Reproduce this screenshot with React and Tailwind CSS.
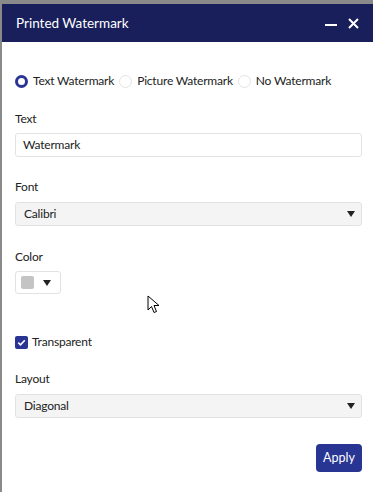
import React from "react";

const font = { fontFamily: '"Segoe UI", Lato, "Noto Sans", sans-serif' };

function Caret() {
  return (
    <svg width="8" height="6" viewBox="0 0 8 6" className="shrink-0">
      <path d="M0 0 H8 L4 6 Z" fill="#222" />
    </svg>
  );
}

function Radio({ checked, label }) {
  return (
    <label className="flex items-center gap-[5px] whitespace-nowrap">
      {checked ? (
        <span className="w-[13px] h-[13px] rounded-full border-[3.5px] border-[#283593] bg-white box-border shrink-0" />
      ) : (
        <span className="w-[13px] h-[13px] rounded-full border border-[#e3e3e3] bg-white box-border shrink-0" />
      )}
      <span>{label}</span>
    </label>
  );
}

function Select({ value }) {
  return (
    <div className="h-[24px] flex items-center justify-between pl-[8px] pr-[6px] bg-[#f4f4f4] border border-[#e2e2e2] rounded-[3px]">
      <span>{value}</span>
      <Caret />
    </div>
  );
}

export default function App() {
  return (
    <div className="w-[373px] h-[492px] bg-[#8a8a8a] pt-[4px] pl-[2px] flex flex-col text-[12px] tracking-[-0.2px] text-[#222]" style={font}>
      <div className="relative flex-1 flex flex-col bg-white">
        <div className="h-[38px] bg-[#181f5a] flex items-center justify-between pl-[14px] pr-[14px] text-white">
          <span className="text-[13.5px] tracking-normal">Printed Watermark</span>
          <div className="flex items-center gap-[10px]">
            <svg width="13" height="12" viewBox="0 0 13 12">
              <rect x="0" y="7" width="12" height="2" fill="#fff" />
            </svg>
            <svg width="11" height="11" viewBox="0 0 11 11">
              <path d="M1 1 L10 10 M10 1 L1 10" stroke="#fff" strokeWidth="2" />
            </svg>
          </div>
        </div>
        <div className="flex flex-col pl-[13px] pr-[11px] pt-[31px]">
          <div className="flex items-center gap-[5px] h-[16px]">
            <Radio checked label="Text Watermark" />
            <Radio label="Picture Watermark" />
            <Radio label="No Watermark" />
          </div>
          <div className="mt-[21px] h-[18px] flex items-center">Text</div>
          <div className="mt-[5px] h-[24px] flex items-center pl-[7px] border border-[#e3e3e3] rounded-[3px] bg-white">Watermark</div>
          <div className="mt-[21px] h-[18px] flex items-center">Font</div>
          <div className="mt-[6px]">
            <Select value="Calibri" />
          </div>
          <div className="mt-[22px] h-[18px] flex items-center">Color</div>
          <div className="mt-[5px] w-[46px] h-[23px] flex items-center gap-[9px] pl-[5px] border border-[#e2e2e2] rounded-[3px] bg-white">
            <span className="w-[13px] h-[13px] rounded-[2px] bg-[#c4c4c4]" />
            <Caret />
          </div>
          <label className="mt-[40px] flex items-center gap-[4px] h-[16px]">
            <span className="w-[13px] h-[13px] rounded-[2px] bg-[#283593] flex items-center justify-center">
              <svg width="9" height="9" viewBox="0 0 9 9">
                <path d="M1.3 4.6 L3.5 6.8 L7.8 2.2" stroke="#fff" strokeWidth="1.6" fill="none" />
              </svg>
            </span>
            <span>Transparent</span>
          </label>
          <div className="mt-[20px] h-[18px] flex items-center">Layout</div>
          <div className="mt-[6px]">
            <Select value="Diagonal" />
          </div>
          <div className="mt-[26px] flex justify-end">
            <button className="w-[46px] h-[28px] rounded-[4px] bg-[#283593] text-white text-[12.5px] tracking-normal">Apply</button>
          </div>
        </div>
        <svg className="absolute left-[145px] top-[291px]" width="14" height="20" viewBox="0 0 14 20">
          <path d="M1 1 L1 15 L4.5 11.5 L7 17.5 L9.5 16.5 L7 10.5 L12 10.5 Z" fill="#fff" stroke="#000" strokeWidth="1" strokeLinejoin="round" />
        </svg>
      </div>
    </div>
  );
}
